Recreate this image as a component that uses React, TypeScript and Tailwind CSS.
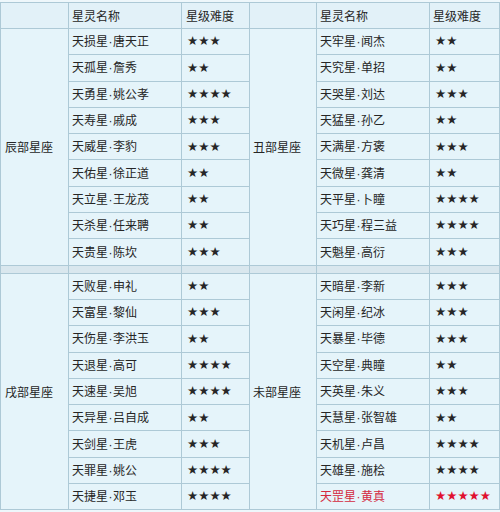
import React from "react";

type Row = { name: string; stars: number; red?: boolean };

const g1L: Row[] = [
  { name: "天损星·唐天正", stars: 3 },
  { name: "天孤星·詹秀", stars: 2 },
  { name: "天勇星·姚公孝", stars: 4 },
  { name: "天寿星·戚成", stars: 3 },
  { name: "天威星·李豹", stars: 3 },
  { name: "天佑星·徐正道", stars: 2 },
  { name: "天立星·王龙茂", stars: 2 },
  { name: "天杀星·任来聘", stars: 2 },
  { name: "天贵星·陈坎", stars: 3 },
];
const g1R: Row[] = [
  { name: "天牢星·闻杰", stars: 2 },
  { name: "天究星·单招", stars: 2 },
  { name: "天哭星·刘达", stars: 3 },
  { name: "天猛星·孙乙", stars: 2 },
  { name: "天满星·方褒", stars: 3 },
  { name: "天微星·龚清", stars: 2 },
  { name: "天平星·卜瞳", stars: 4 },
  { name: "天巧星·程三益", stars: 4 },
  { name: "天魁星·高衍", stars: 3 },
];
const g2L: Row[] = [
  { name: "天败星·申礼", stars: 2 },
  { name: "天富星·黎仙", stars: 3 },
  { name: "天伤星·李洪玉", stars: 2 },
  { name: "天退星·高可", stars: 4 },
  { name: "天速星·吴旭", stars: 4 },
  { name: "天异星·吕自成", stars: 2 },
  { name: "天剑星·王虎", stars: 3 },
  { name: "天罪星·姚公", stars: 4 },
  { name: "天捷星·邓玉", stars: 4 },
];
const g2R: Row[] = [
  { name: "天暗星·李新", stars: 3 },
  { name: "天闲星·纪冰", stars: 3 },
  { name: "天暴星·毕德", stars: 3 },
  { name: "天空星·典瞳", stars: 2 },
  { name: "天英星·朱义", stars: 3 },
  { name: "天慧星·张智雄", stars: 2 },
  { name: "天机星·卢昌", stars: 4 },
  { name: "天雄星·施桧", stars: 4 },
  { name: "天罡星·黄真", stars: 5, red: true },
];

const td = "border border-[#adc9d6] px-[3px] align-middle whitespace-nowrap";
const starCls = "text-[12.5px] pl-[5px] font-['DejaVu_Sans',sans-serif]";

function Name({ text }: { text: string }) {
  const [a, b] = text.split("·");
  return (
    <>
      {a}
      <span className="font-['Liberation_Sans',sans-serif] px-[0.5px]">·</span>
      {b}
    </>
  );
}

function Group({ l, r, labelL, labelR }: { l: Row[]; r: Row[]; labelL: string; labelR: string }) {
  return (
    <>
      {l.map((row, i) => (
        <tr key={i} className="h-[26.3px]">
          {i === 0 && (
            <td rowSpan={9} className={td + " pl-[4px]"}>
              {labelL}
            </td>
          )}
          <td className={td}>
            <Name text={row.name} />
          </td>
          <td className={td + " " + starCls}>{"★".repeat(row.stars)}</td>
          {i === 0 && (
            <td rowSpan={9} className={td + " pl-[3px]"}>
              {labelR}
            </td>
          )}
          <td className={td + (r[i].red ? " text-[#d42a40]" : "")}>
            <Name text={r[i].name} />
          </td>
          <td className={td + " " + starCls + (r[i].red ? " text-[#e0102f]" : "")}>
            {"★".repeat(r[i].stars)}
          </td>
        </tr>
      ))}
    </>
  );
}

export default function App() {
  return (
    <div
      className="w-[500px] h-[512px] bg-[#eef7fb] pt-[2px] overflow-hidden"
      style={{ fontFamily: '"Noto Sans CJK SC", "Noto Sans", sans-serif' }}
    >
      <table className="table-fixed border-collapse w-[499px] bg-[#e5f4fa] text-[12px] text-[#262626] leading-none">
        <colgroup>
          <col className="w-[68px]" />
          <col className="w-[113px]" />
          <col className="w-[68px]" />
          <col className="w-[67px]" />
          <col className="w-[113px]" />
          <col className="w-[70px]" />
        </colgroup>
        <tbody>
          <tr className="h-[26px] bg-[#e2f1f8]">
            <td className={td}></td>
            <td className={td}>星灵名称</td>
            <td className={td + " pl-[4px]"}>星级难度</td>
            <td className={td}></td>
            <td className={td}>星灵名称</td>
            <td className={td}>星级难度</td>
          </tr>
          <Group l={g1L} r={g1R} labelL="辰部星座" labelR="丑部星座" />
          <tr className="h-[8px] bg-[#d9e7ee]">
            <td className={td + " p-0"}></td>
            <td className={td + " p-0"}></td>
            <td className={td + " p-0"}></td>
            <td className={td + " p-0"}></td>
            <td className={td + " p-0"}></td>
            <td className={td + " p-0"}></td>
          </tr>
          <Group l={g2L} r={g2R} labelL="戌部星座" labelR="未部星座" />
        </tbody>
      </table>
    </div>
  );
}
